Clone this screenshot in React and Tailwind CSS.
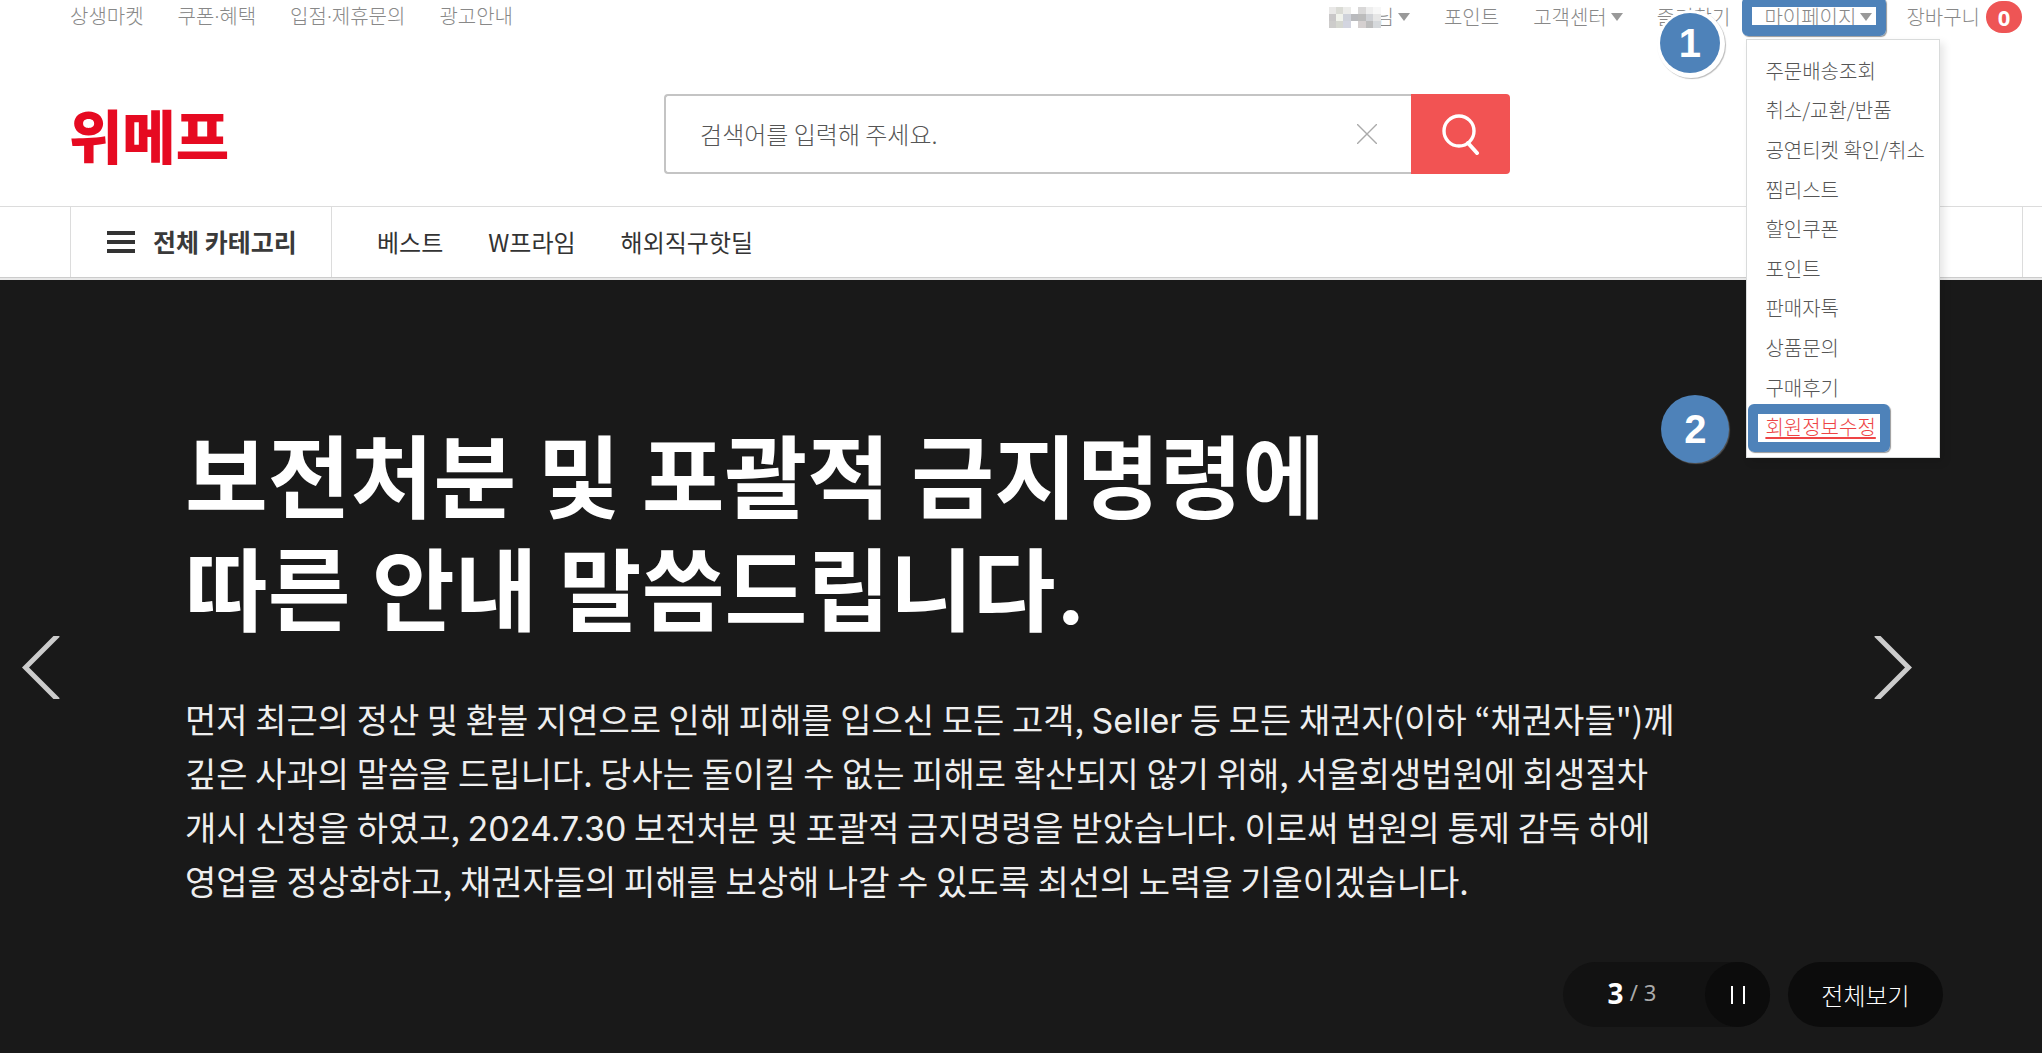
import { clsx } from 'clsx'

const leftLinks = ['상생마켓', '쿠폰·혜택', '입점·제휴문의', '광고안내']

const myPageLinks = [
  '주문배송조회',
  '취소/교환/반품',
  '공연티켓 확인/취소',
  '찜리스트',
  '할인쿠폰',
  '포인트',
  '판매자톡',
  '상품문의',
  '구매후기',
  '회원정보수정',
]

const navLinks = ['베스트', 'W프라임', '해외직구핫딜']

const mosaic = [
  'bg-[#e9e8e7]', 'bg-[#dadbd5]', 'bg-[#ececea]', 'bg-white', 'bg-[#d9d8d8]', 'bg-[#eeeeee]', 'bg-[#f7f7f7]',
  'bg-[#c9c7c8]', 'bg-[#f1f3ec]', 'bg-[#cfd2da]', 'bg-[#b9babd]', 'bg-[#bcbcbc]', 'bg-[#d0d2d6]', 'bg-[#e6e6e6]',
  'bg-[#cdcccb]', 'bg-[#d5d7d0]', 'bg-[#d3d5e0]', 'bg-white', 'bg-[#d5d0d0]', 'bg-[#bdbdbd]', 'bg-[#d6d9dc]',
]

const Caret = () => (
  <svg viewBox="0 0 12 8" className="w-3 h-2" fill="#999">
    <path d="M0 0h12L6 8z" />
  </svg>
)

const Step = ({ n, className }) => (
  <span
    className={clsx(
      'absolute z-30 flex items-center justify-center rounded-full bg-[#4e82b9] text-white font-bold font-["Liberation_Sans",sans-serif]',
      className
    )}
  >
    {n}
  </span>
)

const MyPageMenu = () => (
  <div className="absolute z-10 top-[39px] -left-[18px] w-[194px] pt-[11px] pb-[10px] bg-white border border-[#d9dbdb] shadow-[4px_4px_8px_rgba(0,0,0,0.1)]">
    <ul className="grid grid-rows-10 h-[396px] pl-[18px] text-[#555]">
      {myPageLinks.map((label) => {
        const active = label === '회원정보수정'
        return (
          <li key={label} className="relative flex items-center whitespace-nowrap">
            <a href="#" className={clsx(active && 'text-[#ee4445] underline underline-offset-2')}>
              {label}
            </a>
            {active && (
              <>
                <span className="absolute z-20 -left-[17px] -top-[3px] w-[142px] h-12 rounded-md border-10 border-[#4e82b9] shadow-[1px_1px_1px_#999]" />
                <Step n="2" className="-left-[104px] -top-[12px] w-[68px] h-[68px] text-[40px] shadow-[1px_1px_1px_#555]" />
              </>
            )}
          </li>
        )
      })}
    </ul>
  </div>
)

const TopBar = () => (
  <div className="flex justify-between h-9 pl-[70px] pr-5 text-[20px] leading-[34px] font-light text-[#888] whitespace-nowrap">
    <ul className="flex gap-[34px] font-['Noto_Sans','Noto_Sans_CJK_KR',sans-serif]">
      {leftLinks.map((label) => (
        <li key={label}>
          <a href="#">{label}</a>
        </li>
      ))}
    </ul>
    <ul className="flex gap-[34px]">
      <li className="flex h-[34px] items-center">
        <span className="relative z-10 grid grid-cols-7 w-[52px] h-[21px] -mr-[5px]">
          {mosaic.map((color, i) => (
            <span key={i} className={color} />
          ))}
        </span>
        <button className="flex items-center gap-1">
          님 <Caret />
        </button>
      </li>
      <li>
        <a href="#">포인트</a>
      </li>
      <li>
        <button className="flex items-center gap-1 h-[34px]">
          고객센터 <Caret />
        </button>
      </li>
      <li className="relative">
        <a href="#">즐겨찾기</a>
        <Step n="1" className="left-[3px] top-[13px] w-[60px] h-[60px] text-[40px] shadow-[1px_1px_0_4px_#fff,2px_2px_1px_4px_#bbb]" />
      </li>
      <li className="relative">
        <button className="flex items-center gap-1 h-[34px]">
          마이페이지 <Caret />
        </button>
        <span className="absolute z-20 -top-[3px] -left-[22px] w-[144px] h-[39px] rounded-md border-10 border-b-11 border-[#4e82b9] shadow-[1px_1px_1px_#999]" />
        <MyPageMenu />
      </li>
      <li>
        <a href="#" className="flex items-center gap-1.5 h-[34px]">
          장바구니
          <span className="flex items-center justify-center w-9 h-8 rounded-full bg-[#ee5555] text-white text-[22px] font-bold font-['Open_Sans',sans-serif]">
            0
          </span>
        </a>
      </li>
    </ul>
  </div>
)

const Header = () => (
  <header className="bg-white">
    <TopBar />
    <div className="flex items-center h-[170px] pl-[69px] pt-[26px]">
      <a href="#" className="shrink-0 text-[58px] leading-none font-black text-[#e60a21] whitespace-nowrap">
        위메프
      </a>
      <form className="flex w-[846px] h-20 ml-[435px]">
        <div className="flex flex-1 items-center px-[34px] rounded-l-[4px] border-2 border-r-0 border-[#c4c4c4]">
          <input
            type="text"
            aria-label="검색어"
            placeholder="검색어를 입력해 주세요."
            className="flex-1 text-[24px] font-light outline-none placeholder:text-[#555]"
          />
          <button type="button" aria-label="지우기">
            <svg viewBox="0 0 20 20" className="w-5 h-5" fill="none" stroke="#aaa" strokeWidth="1.4">
              <path d="M0 0l20 20M20 0L0 20" />
            </svg>
          </button>
        </div>
        <button type="button" aria-label="검색" className="w-[99px] rounded-r-[4px] bg-[#f25353] flex items-center justify-center">
          <svg viewBox="0 0 38 42" className="w-[38px] h-[42px]" fill="none" stroke="#fff" strokeWidth="3.4">
            <circle cx="17" cy="18" r="15" />
            <path d="M26 30l9 10" strokeWidth="4" strokeLinecap="round" />
          </svg>
        </button>
      </form>
    </div>
    <nav className="flex h-[72px] pl-[70px] pr-[19px] border-t border-[#dcdcdc] border-b border-b-[#ccc]">
      <div className="flex flex-1 border-x border-[#dcdcdc]">
        <button className="flex items-center gap-[18px] w-[261px] pl-9 border-r border-[#dcdcdc] text-[25px] font-bold text-[#3a3a3a]">
          <svg viewBox="0 0 28 24" className="w-7 h-6" fill="#333">
            <path d="M0 1h28v4H0zM0 10h28v4H0zM0 19h28v4H0z" />
          </svg>
          전체 카테고리
        </button>
        <ul className="flex items-center gap-[45px] pl-[45px] text-[24px] text-[#333]">
          {navLinks.map((label) => (
            <li key={label}>
              <a href="#">{label}</a>
            </li>
          ))}
        </ul>
      </div>
    </nav>
  </header>
)

const Hero = () => (
  <section className="relative flex-1 flex flex-col justify-between border-t-2 border-[#e8e8e8] bg-[#191919] text-white">
    <div className="pl-[185px] pt-[142px]">
      <h1 className="text-[90px] leading-[113px] font-bold font-['Inter','Noto_Sans_CJK_KR',sans-serif]">
        보전처분 및 포괄적 금지명령에
        <br />
        따른 안내 말씀드립니다.
      </h1>
      <p className="mt-[44px] text-[34px] leading-[54px] text-[#eee]">
        먼저 최근의 정산 및 환불 지연으로 인해 피해를 입으신 모든 고객,{' '}
        <span className="leading-none font-['Inter',sans-serif]">Seller</span> 등 모든 채권자(이하 “채권자들")께
        <br />
        깊은 사과의 말씀을 드립니다. 당사는 돌이킬 수 없는 피해로 확산되지 않기 위해, 서울회생법원에 회생절차
        <br />
        개시 신청을 하였고, <span className="leading-none font-['Inter',sans-serif]">2024.7.30</span> 보전처분 및 포괄적
        금지명령을 받았습니다. 이로써 법원의 통제 감독 하에
        <br />
        영업을 정상화하고, 채권자들의 피해를 보상해 나갈 수 있도록 최선의 노력을 기울이겠습니다.
      </p>
    </div>

    {/* Slide arrows */}
    <button aria-label="이전" className="absolute left-[22px] top-[356px]">
      <svg viewBox="0 0 38 63" className="w-[38px] h-[63px]" fill="none" stroke="#ccc" strokeWidth="5">
        <path d="M36 -1L3.500 31.500L36 64" />
      </svg>
    </button>
    <button aria-label="다음" className="absolute right-[130px] top-[356px]">
      <svg viewBox="0 0 38 63" className="w-[38px] h-[63px]" fill="none" stroke="#ccc" strokeWidth="5">
        <path d="M2 -1L34.500 31.500L2 64" />
      </svg>
    </button>

    {/* Slide counter */}
    <div className="flex justify-end gap-[18px] pr-[99px] pb-[26px]">
      <div className="flex w-[207px] h-[65px] rounded-full bg-[#121212]">
        <p className="flex-1 flex items-center justify-center gap-1.5 pb-1 pr-1 text-[22px] text-[#aaa] font-['Noto_Sans',sans-serif]">
          <strong className="text-[28px] text-white">3</strong>
          <span>/</span>
          <span>3</span>
        </p>
        <button aria-label="일시정지" className="w-[65px] rounded-full bg-[#0c0c0c] flex items-center justify-center">
          <svg viewBox="0 0 14 18" className="w-[14px] h-[18px]" fill="#fff">
            <path d="M0 0h2v18H0zM12 0h2v18h-2z" />
          </svg>
        </button>
      </div>
      <button className="w-[155px] h-[65px] rounded-full bg-[#0c0c0c] text-[24px] font-light">전체보기</button>
    </div>
  </section>
)

export default function App() {
  return (
    <div className="min-h-screen flex flex-col overflow-x-hidden bg-white font-['Noto_Sans_CJK_KR',sans-serif]">
      <Header />
      <Hero />
    </div>
  )
}
